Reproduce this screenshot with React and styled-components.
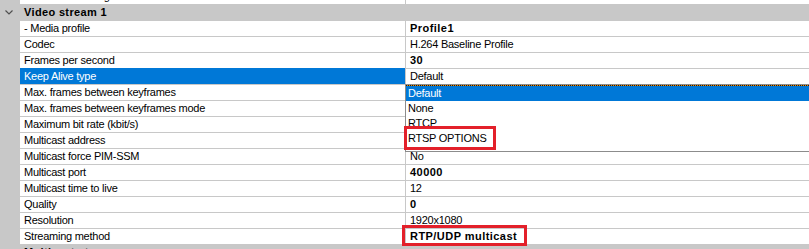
import React from "react";
import styled, { createGlobalStyle } from "styled-components";

const GlobalStyle = createGlobalStyle`
  body {
    margin: 0;
    background: #ffffff;
    font-family: "Liberation Sans", Arial, sans-serif;
    font-size: 11px;
    color: #000000;
  }
`;

const Page = styled.div`
  position: relative;
  width: 809px;
  height: 249px;
  overflow: hidden;
  background: #ffffff;
`;

const Grid = styled.div`
  margin-top: -12px;
  display: flex;
  flex-direction: column;
`;

const Row = styled.div`
  display: flex;
  height: 16px;
`;

const Gutter = styled.div`
  width: 20px;
  flex-shrink: 0;
  background: #c8c8c8;
`;

const NameCell = styled.div`
  width: 385px;
  flex-shrink: 0;
  box-sizing: border-box;
  border-top: 1px solid ${(p) => (p.$selected ? "#0078d7" : "#c8c8c8")};
  background: ${(p) => (p.$selected ? "#0078d7" : "#ffffff")};
  color: ${(p) => (p.$selected ? "#ffffff" : "#000000")};
  padding-left: 4px;
  line-height: 15px;
  letter-spacing: -0.25px;
  white-space: nowrap;
  overflow: hidden;
`;

const ValueCell = styled.div`
  position: relative;
  flex: 1;
  box-sizing: border-box;
  border-top: 1px solid #c8c8c8;
  border-left: 1px solid #c8c8c8;
  padding-left: 4px;
  line-height: 15px;
  font-weight: ${(p) => (p.$bold ? 700 : 400)};
  letter-spacing: ${(p) => (p.$bold ? "0.45px" : "-0.25px")};
  white-space: nowrap;
`;

const GroupHeader = styled.div`
  display: flex;
  align-items: center;
  height: 16px;
  background: #c8c8c8;
  font-weight: 700;
  letter-spacing: 0.35px;
`;

const Toggle = styled.div`
  width: 24px;
  height: 16px;
  flex-shrink: 0;
  display: flex;
  align-items: center;
`;

const Dropdown = styled.div`
  position: absolute;
  top: 15px;
  left: -1px;
  width: 430px;
  height: 68px;
  box-sizing: border-box;
  border: 1px solid #8c8c8c;
  background: #ffffff;
  font-weight: 400;
  letter-spacing: -0.25px;
  z-index: 2;
`;

const Option = styled.div`
  height: 15px;
  line-height: 15px;
  padding-left: 2px;
  background: ${(p) => (p.$active ? "#0078d7" : "#ffffff")};
  color: ${(p) => (p.$active ? "#ffffff" : "#000000")};
`;

const FocusLine = styled.div`
  height: 1px;
  background-image: repeating-linear-gradient(
    90deg,
    #1a1a1a 0 1px,
    #f08a00 1px 2px
  );
`;

const Mark = styled.div`
  position: absolute;
  left: ${(p) => p.$x}px;
  top: ${(p) => p.$y}px;
  width: ${(p) => p.$w}px;
  height: ${(p) => p.$h}px;
  box-sizing: border-box;
  border: 3px solid #e3202a;
  z-index: 3;
`;

const Chevron = () => (
  <svg width="20" height="16" viewBox="0 0 20 16">
    <path d="M5.5 6.5 L9 10 L12.5 6.5" fill="none" stroke="#505050" strokeWidth="1.2" />
  </svg>
);

// values under the open list are hidden by it, so they stay empty
const rows = [
  ["- Media profile", "Profile1", true],
  ["Codec", "H.264 Baseline Profile"],
  ["Frames per second", "30", true],
  ["Keep Alive type", "Default", false, true],
  ["Max. frames between keyframes", ""],
  ["Max. frames between keyframes mode", ""],
  ["Maximum bit rate (kbit/s)", ""],
  ["Multicast address", ""],
  ["Multicast force PIM-SSM", "No"],
  ["Multicast port", "40000", true],
  ["Multicast time to live", "12"],
  ["Quality", "0", true],
  ["Resolution", "1920x1080"],
  ["Streaming method", "RTP/UDP multicast", true],
];

const options = ["None", "RTCP", "RTSP OPTIONS"];

const App = () => (
  <Page>
    <GlobalStyle />
    <Grid>
      <Row>
        <Gutter />
        <NameCell>White balance R gain</NameCell>
        <ValueCell>5</ValueCell>
      </Row>
      <GroupHeader>
        <Toggle>
          <Chevron />
        </Toggle>
        Video stream 1
      </GroupHeader>
      {rows.map(([name, value, bold, selected]) => (
        <Row key={name}>
          <Gutter />
          <NameCell $selected={selected}>{name}</NameCell>
          <ValueCell $bold={bold}>
            {value}
            {selected && (
              <Dropdown>
                <FocusLine />
                <Option $active>Default</Option>
                {options.map((o) => (
                  <Option key={o}>{o}</Option>
                ))}
              </Dropdown>
            )}
          </ValueCell>
        </Row>
      ))}
      <GroupHeader>
        <Toggle>
          <Chevron />
        </Toggle>
        Multicast stream
      </GroupHeader>
    </Grid>
    <Mark $x={404} $y={126} $w={92} $h={24} />
    <Mark $x={402} $y={225} $w={125} $h={21} />
  </Page>
);

export default App;
